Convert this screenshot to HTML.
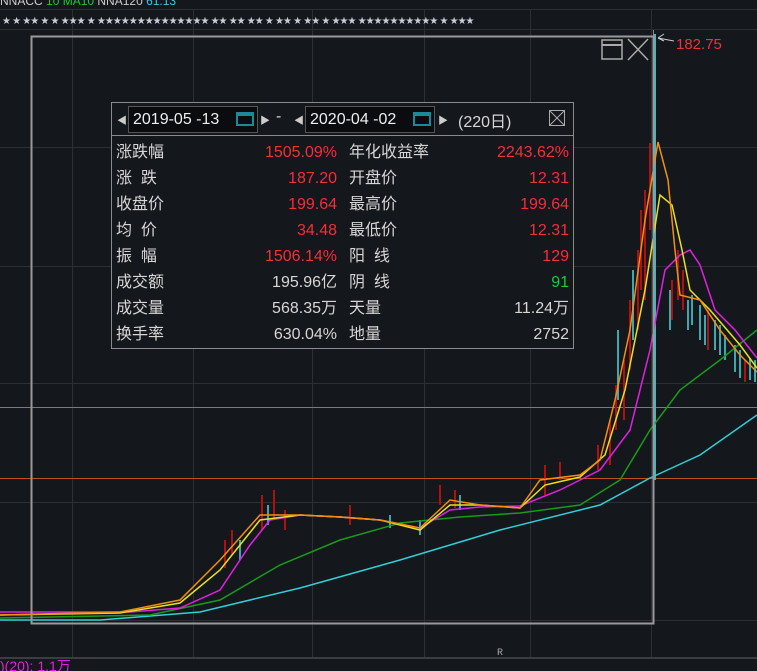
<!DOCTYPE html>
<html><head><meta charset="utf-8"><style>
html,body{margin:0;padding:0;background:#14171c;width:757px;height:671px;overflow:hidden;font-family:"Liberation Sans","Noto Sans CJK SC",sans-serif}
#p{position:absolute;left:111px;top:102px;width:461px;height:245px;border:1px solid #8a8a8a;background:#14171c;color:#d6d6d6;font-size:16px}
.hd{height:32px;border-bottom:1px solid #8a8a8a;position:relative}
.db{position:absolute;top:3px;height:25px;border:1px solid #555;background:#0a0c0f;line-height:25px;font-size:16px;color:#eee;padding-left:4px}
.ar{position:absolute;top:9px;color:#ccc;font-size:10px}
.r{position:absolute;left:0;width:461px;height:26px;line-height:26px}
.r span{position:absolute}
.red{color:#f0303a}.grn{color:#1ec83c}
</style></head><body>
<svg width="757" height="671" style="position:absolute;left:0;top:0">
<g stroke="#2c2f35" stroke-width="1">
<line x1="0" y1="9.5" x2="757" y2="9.5"/><line x1="0" y1="29.5" x2="757" y2="29.5"/>
<line x1="0" y1="147.5" x2="757" y2="147.5"/><line x1="0" y1="266.5" x2="757" y2="266.5"/>
<line x1="0" y1="383.5" x2="757" y2="383.5"/><line x1="0" y1="502.5" x2="757" y2="502.5"/>
<line x1="0" y1="620.5" x2="757" y2="620.5"/>
<line x1="72.5" y1="9" x2="72.5" y2="657"/><line x1="193.5" y1="9" x2="193.5" y2="657"/>
<line x1="312.5" y1="9" x2="312.5" y2="657"/><line x1="424.5" y1="9" x2="424.5" y2="657"/>
<line x1="530.5" y1="9" x2="530.5" y2="657"/><line x1="651.5" y1="9" x2="651.5" y2="657"/>
</g>
<line x1="0" y1="658" x2="757" y2="658" stroke="#3a3d42" stroke-width="2"/>
<line x1="0" y1="407.5" x2="757" y2="407.5" stroke="#7a7a7a"/>
<line x1="0" y1="478.5" x2="757" y2="478.5" stroke="#c0501a"/>
<line x1="653.5" y1="30" x2="653.5" y2="624" stroke="#8a8a8a"/>
<line x1="655" y1="34" x2="655" y2="480" stroke="#3fb8c0" stroke-width="2"/>
<g stroke-width="2">
<g stroke="#b01010"><line x1="232" y1="530" x2="232" y2="555"/><line x1="262" y1="495" x2="262" y2="530"/><line x1="274" y1="490" x2="274" y2="520"/><line x1="350" y1="505" x2="350" y2="525"/><line x1="440" y1="485" x2="440" y2="505"/><line x1="545" y1="465" x2="545" y2="495"/><line x1="610" y1="420" x2="610" y2="465"/><line x1="624" y1="360" x2="624" y2="420"/><line x1="638" y1="250" x2="638" y2="330"/><line x1="645" y1="190" x2="645" y2="300"/><line x1="650" y1="143" x2="650" y2="230"/><line x1="672" y1="280" x2="672" y2="320"/><line x1="708" y1="310" x2="708" y2="350"/><line x1="745" y1="360" x2="745" y2="382"/><line x1="225" y1="540" x2="225" y2="568"/><line x1="285" y1="510" x2="285" y2="530"/><line x1="616" y1="385" x2="616" y2="430"/><line x1="630" y1="300" x2="630" y2="370"/><line x1="641" y1="210" x2="641" y2="290"/><line x1="678" y1="250" x2="678" y2="300"/><line x1="683" y1="270" x2="683" y2="310"/><line x1="598" y1="445" x2="598" y2="470"/><line x1="560" y1="462" x2="560" y2="480"/><line x1="455" y1="490" x2="455" y2="508"/></g>
<g stroke="#3aa8b0"><line x1="240" y1="540" x2="240" y2="560"/><line x1="268" y1="505" x2="268" y2="525"/><line x1="390" y1="515" x2="390" y2="528"/><line x1="420" y1="520" x2="420" y2="535"/><line x1="460" y1="495" x2="460" y2="510"/><line x1="618" y1="330" x2="618" y2="400"/><line x1="633" y1="270" x2="633" y2="340"/><line x1="670" y1="290" x2="670" y2="330"/><line x1="688" y1="300" x2="688" y2="330"/><line x1="700" y1="305" x2="700" y2="340"/><line x1="715" y1="320" x2="715" y2="350"/><line x1="725" y1="335" x2="725" y2="360"/><line x1="735" y1="345" x2="735" y2="372"/><line x1="750" y1="358" x2="750" y2="380"/><line x1="692" y1="295" x2="692" y2="325"/><line x1="705" y1="315" x2="705" y2="345"/><line x1="720" y1="325" x2="720" y2="355"/><line x1="740" y1="350" x2="740" y2="378"/><line x1="755" y1="360" x2="755" y2="382"/></g>
</g>
<g fill="none" stroke-width="1.5">
<polyline stroke="#2fd0d8" points="0,620 100,620 200,612 300,588 400,560 500,530 600,505 650,478 700,455 757,415"/>
<polyline stroke="#1a9a1a" points="0,618 150,615 220,600 280,565 340,540 400,523 460,517 520,513 580,505 620,480 650,430 680,390 720,360 757,330"/>
<polyline stroke="#e020e0" points="0,612 130,612 180,608 220,590 250,545 270,520 300,515 340,517 380,520 420,528 450,510 480,507 520,506 560,490 600,470 630,430 650,350 665,270 680,255 690,250 700,265 715,310 735,330 757,358"/>
<polyline stroke="#e8e020" points="0,615 120,613 180,603 220,570 260,520 300,515 340,517 380,520 420,530 450,505 480,505 520,508 545,485 580,477 605,455 625,390 645,290 660,195 672,205 682,250 690,290 710,310 740,345 757,368"/>
<polyline stroke="#f09010" points="0,615 120,612 180,600 220,560 260,515 300,515 340,517 380,520 420,528 450,500 480,505 520,508 540,480 580,475 600,460 615,400 630,330 645,220 658,142 668,180 675,250 680,295 700,300 720,330 740,355 757,372"/>
</g>
<rect x="31.5" y="36.5" width="622" height="587" fill="none" stroke="#9a9a9a" stroke-width="2"/>
<rect x="602" y="40" width="20" height="19" fill="none" stroke="#aaa" stroke-width="1.5"/><line x1="602" y1="45" x2="622" y2="45" stroke="#aaa" stroke-width="2"/>
<path d="M628 39 L648 60 M648 39 L628 60" stroke="#aaa" stroke-width="1.5"/>
<path d="M658 38 L664 34 M658 38 L664 41 M658 38 L674 41" stroke="#ccc" fill="none"/>
<text x="676" y="49" fill="#f0303a" font-size="15" font-family="Liberation Sans">182.75</text>
<text x="497" y="655" fill="#aaa" font-size="10" font-family="Liberation Mono">R</text>
<text x="0" y="671" fill="#e020e0" font-size="14" font-family="Liberation Sans,Noto Sans CJK SC">)(20): 1.1万</text>
<text x="0" y="5" fill="#ccc" font-size="12" font-family="Liberation Sans">NNACC <tspan fill="#1ec83c">10 MA10</tspan> NNA120 <tspan fill="#2fd0d8">61.13</tspan></text>
<g fill="#c8ccd8" font-size="10" font-family="DejaVu Sans">
<text x="2" y="24" letter-spacing="-1">★        ★ ★★ ★  ★ ★★★ ★  ★★★★★★★★★★★★★★ ★★  ★★ ★★ ★     ★★      ★      ★★          ★   ★★★  ★★★★★★★★★★ ★ ★★★</text>
</g>
</svg>
<div id="p">
<div class="hd">
<span class="ar" style="left:5px">◀</span>
<div class="db" style="left:16px;width:124px">2019-05 -13<span style="position:absolute;right:3px;top:5px;width:18px;height:14px;border:2px solid #1a8a9a;border-top-width:4px;box-sizing:border-box"></span></div>
<span class="ar" style="left:148px">▶</span><span style="position:absolute;left:164px;top:5px">-</span>
<span class="ar" style="left:182px">◀</span>
<div class="db" style="left:193px;width:124px">2020-04 -02<span style="position:absolute;right:3px;top:5px;width:18px;height:14px;border:2px solid #1a8a9a;border-top-width:4px;box-sizing:border-box"></span></div>
<span class="ar" style="left:326px">▶</span>
<span style="position:absolute;left:346px;top:5px">(220日)</span>
<span style="position:absolute;left:437px;top:7px;width:16px;height:16px;border:1px solid #aaa;box-sizing:border-box;overflow:hidden"><svg width="16" height="16" style="position:absolute;left:-1px;top:-1px"><path d="M1 1L15 15M15 1L1 15" stroke="#aaa"/></svg></span>
</div>
<div class="r" style="top:37px"><span style="left:4px">涨跌幅</span><span class="red" style="right:236px">1505.09%</span><span style="left:237px">年化收益率</span><span class="red" style="right:4px">2243.62%</span></div>
<div class="r" style="top:63px"><span style="left:4px">涨&nbsp;&nbsp;跌</span><span class="red" style="right:236px">187.20</span><span style="left:237px">开盘价</span><span class="red" style="right:4px">12.31</span></div>
<div class="r" style="top:89px"><span style="left:4px">收盘价</span><span class="red" style="right:236px">199.64</span><span style="left:237px">最高价</span><span class="red" style="right:4px">199.64</span></div>
<div class="r" style="top:115px"><span style="left:4px">均&nbsp;&nbsp;价</span><span class="red" style="right:236px">34.48</span><span style="left:237px">最低价</span><span class="red" style="right:4px">12.31</span></div>
<div class="r" style="top:141px"><span style="left:4px">振&nbsp;&nbsp;幅</span><span class="red" style="right:236px">1506.14%</span><span style="left:237px">阳&nbsp;&nbsp;线</span><span class="red" style="right:4px">129</span></div>
<div class="r" style="top:167px"><span style="left:4px">成交额</span><span style="right:236px">195.96亿</span><span style="left:237px">阴&nbsp;&nbsp;线</span><span class="grn" style="right:4px">91</span></div>
<div class="r" style="top:193px"><span style="left:4px">成交量</span><span style="right:236px">568.35万</span><span style="left:237px">天量</span><span style="right:4px">11.24万</span></div>
<div class="r" style="top:219px"><span style="left:4px">换手率</span><span style="right:236px">630.04%</span><span style="left:237px">地量</span><span style="right:4px">2752</span></div>
</div>
</body></html>
